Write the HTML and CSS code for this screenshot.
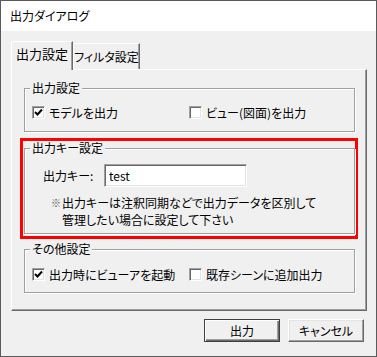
FILE: index.html
```html
<!DOCTYPE html>
<html lang="ja">
<head>
  <meta charset="UTF-8">
  <title>出力ダイアログ</title>
  <link rel="stylesheet" href="styles.css">
</head>
<body>
  <div class="window">
    <div class="titlebar">出力ダイアログ</div>

    <div class="client">
      <div class="tabs">
        <div class="tab active">出力設定</div>
        <div class="tab">フィルタ設定</div>
      </div>

      <div class="tab-panel">
        <fieldset class="group">
          <legend>出力設定</legend>
          <div class="check-row">
            <label class="check"><span class="box"><svg viewBox="0 0 9 9" width="9" height="9"><path d="M1 4 L3.5 6.5 L8 1.5" fill="none" stroke="#000" stroke-width="2"/></svg></span>モデルを出力</label>
            <label class="check"><span class="box"></span>ビュー(図面)を出力</label>
          </div>
        </fieldset>

        <!-- highlighted section -->
        <div class="highlight">
          <fieldset class="group key-group">
            <legend>出力キー設定</legend>
            <div class="key-row">
              <span class="key-label">出力キー:</span>
              <input type="text" class="key-input" value="test">
            </div>
            <div class="note">
              <span class="mark">※</span>
              <p>出力キーは注釈同期などで出力データを区別して<br>管理したい場合に設定して下さい</p>
            </div>
          </fieldset>
        </div>

        <fieldset class="group other-group">
          <legend>その他設定</legend>
          <div class="check-row">
            <label class="check"><span class="box"><svg viewBox="0 0 9 9" width="9" height="9"><path d="M1 4 L3.5 6.5 L8 1.5" fill="none" stroke="#000" stroke-width="2"/></svg></span>出力時にビューアを起動</label>
            <label class="check"><span class="box"></span>既存シーンに追加出力</label>
          </div>
        </fieldset>
      </div>

      <div class="buttons">
        <button class="btn default">出力</button>
        <button class="btn">キャンセル</button>
      </div>
    </div>
  </div>
</body>
</html>
```

FILE: styles.css
```css
body {
  margin: 0;
  font-family: "Noto Sans CJK JP", "Noto Sans", sans-serif;
  font-size: 12px;
  font-feature-settings: "palt";
  color: #000;
  background: #5a5a5a;
}
.window {
  width: 377px;
  height: 357px;
  box-sizing: border-box;
  border: 1px solid #5a5a5a;
  background: #f0f0f0;
}
.titlebar {
  height: 30px;
  line-height: 29px;
  padding-left: 9px;
  background: #fff;
}
.client {
  padding: 10px 9px 0 10px;
}
.tabs {
  display: flex;
  align-items: flex-end;
  height: 28px;
}
.tab {
  box-sizing: border-box;
  height: 26px;
  width: 67px;
  padding-top: 6px;
  line-height: 14px;
  text-align: center;
  background: #f0f0f0;
  border-top: 1px solid #fff;
  border-left: 1px solid #fff;
  border-right: 1px solid #696969;
  border-top-left-radius: 2px;
  box-shadow: inset -1px 0 0 #a0a0a0;
}
.tab.active {
  position: relative;
  z-index: 1;
  height: 29px;
  width: 62px;
  margin-bottom: -1px;
  padding-top: 5px;
  font-size: 13px;
}
.tab-panel {
  height: 242px;
  box-sizing: border-box;
  padding: 11px 11px 0 12px;
  border: 1px solid #696969;
  border-top-color: #fff;
  border-left-color: #fff;
  box-shadow: inset -1px -1px 0 #a0a0a0;
}
.group {
  margin: 0;
  padding: 11px 0 12px 0;
  border: 1px solid #a0a0a0;
  box-shadow: inset 1px 1px 0 #fff, 1px 1px 0 #fff;
  min-width: 0;
}
.group legend {
  margin-left: 5px;
  padding: 0 2px;
  line-height: 14px;
  background: #f0f0f0;
}
.check-row {
  display: flex;
  height: 13px;
  align-items: center;
  padding-left: 7px;
}
.check {
  display: flex;
  align-items: center;
  gap: 4px;
  line-height: 13px;
}
.check:first-child {
  width: 157px;
}
.box {
  box-sizing: border-box;
  width: 13px;
  height: 13px;
  display: flex;
  align-items: center;
  justify-content: center;
  background: #fff;
  border: 1px solid;
  border-color: #a0a0a0 #fff #fff #a0a0a0;
  box-shadow: inset 1px 1px 0 #696969, inset -1px -1px 0 #e3e3e3;
}
.highlight {
  margin: 6px -3px 0 -4px;
  padding: 0 0 2px 1px;
  border: 3px solid #f00;
}
.key-group {
  padding: 9px 0 5px 0;
}
.key-row {
  display: flex;
  align-items: center;
  height: 23px;
  padding-left: 18px;
}
.key-label {
  width: 61px;
}
.key-input {
  box-sizing: border-box;
  width: 143px;
  height: 23px;
  margin: 0;
  padding: 0 4px;
  font: inherit;
  border: 1px solid;
  border-color: #a0a0a0 #fff #fff #a0a0a0;
  box-shadow: inset 1px 1px 0 #696969, inset -1px -1px 0 #e3e3e3;
  background: #fff;
  outline: none;
}
.note {
  display: flex;
  margin: 7px 0 0 26px;
  line-height: 17px;
}
.mark {
  width: 11px;
  font-size: 10px;
  color: #555;
}
.note p {
  margin: 0;
}
.other-group {
  margin-top: 3px;
  padding-top: 12px;
  padding-bottom: 11px;
}
.buttons {
  display: flex;
  justify-content: flex-end;
  gap: 8px;
  margin: 8px 3px 0 0;
}
.btn {
  box-sizing: border-box;
  width: 76px;
  height: 23px;
  padding: 0;
  font: inherit;
  color: #000;
  background: #f0f0f0;
  border: 1px solid;
  border-color: #fff #696969 #696969 #fff;
  box-shadow: inset -1px -1px 0 #a0a0a0, inset 1px 1px 0 #e3e3e3;
}
.btn.default {
  border: 1px solid #404040;
  box-shadow: inset 1px 1px 0 #fff, inset -1px -1px 0 #696969, inset -2px -2px 0 #a0a0a0;
}
```
